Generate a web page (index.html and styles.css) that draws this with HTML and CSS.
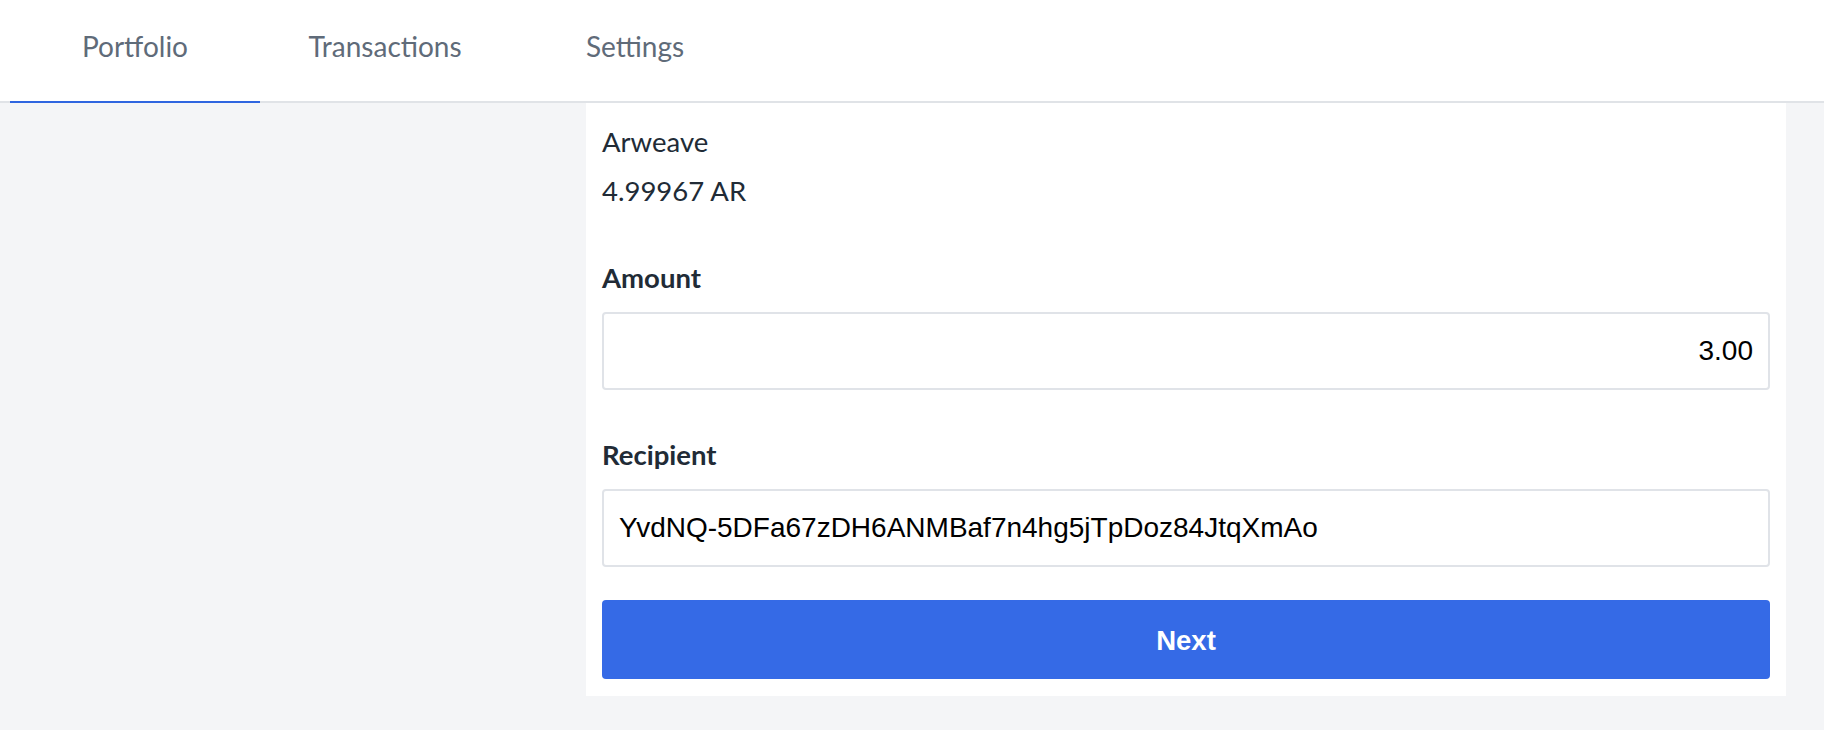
FILE: index.html
```html
<!DOCTYPE html>
<html lang="en">
<head>
<meta charset="utf-8">
<title>Send</title>
<link rel="stylesheet" href="styles.css">
</head>
<body>
<header class="header">
  <nav class="tabs">
    <a class="tab active">Portfolio</a>
    <a class="tab">Transactions</a>
    <a class="tab">Settings</a>
  </nav>
</header>
<main class="main">
  <div class="aside"></div>
  <section class="card">
    <div class="token-name">Arweave</div>
    <div class="token-balance">4.99967 AR</div>
    <label class="label label-amount">Amount</label>
    <input class="field field-amount" type="text" value="3.00">
    <label class="label label-recipient">Recipient</label>
    <input class="field" type="text" value="YvdNQ-5DFa67zDH6ANMBaf7n4hg5jTpDoz84JtqXmAo">
    <button class="btn">Next</button>
  </section>
</main>
</body>
</html>
```

FILE: styles.css
```css
* { box-sizing: border-box; }
body {
  margin: 0;
  background: #f4f5f7;
  font-family: Lato, "Liberation Sans", sans-serif;
  color: #212b36;
}
.header {
  background: #fff;
  height: 103px;
  border-bottom: 2px solid #e0e3e7;
}
.tabs {
  display: flex;
  height: 101px;
  padding-left: 10px;
}
.tab {
  position: relative;
  width: 250px;
  display: flex;
  align-items: center;
  justify-content: center;
  padding-bottom: 10px;
  font-size: 28px;
  color: #5f6b79;
  cursor: pointer;
}
.tab.active::after {
  content: "";
  position: absolute;
  left: 0;
  right: 0;
  bottom: -2px;
  height: 2px;
  background: #2f66e0;
}
.main {
  display: grid;
  grid-template-columns: 586px 1200px;
  align-items: start;
}
.card {
  background: #fff;
  padding: 14px 16px 17px;
  display: flex;
  flex-direction: column;
}
.token-name, .token-balance {
  font-size: 27.5px;
  line-height: 49px;
}
.label {
  font-size: 27.5px;
  line-height: 49px;
  font-weight: 700;
}
.label-amount { margin-top: 38px; }
.label-recipient { margin-top: 40px; }
.field {
  margin-top: 10px;
  height: 78px;
  width: 100%;
  border: 2px solid #e0e3e8;
  border-radius: 4px;
  padding: 0 15px;
  font: 28px "Liberation Sans", Arial, sans-serif;
  color: #000;
  background: #fff;
  outline: none;
}
.field-amount { text-align: right; }
.btn {
  margin-top: 33px;
  height: 79px;
  width: 100%;
  border: none;
  border-radius: 4px;
  padding: 3px 0 0;
  background: #356ae6;
  color: #fff;
  font: 700 27.5px "Liberation Sans", Arial, sans-serif;
  cursor: pointer;
}
```
